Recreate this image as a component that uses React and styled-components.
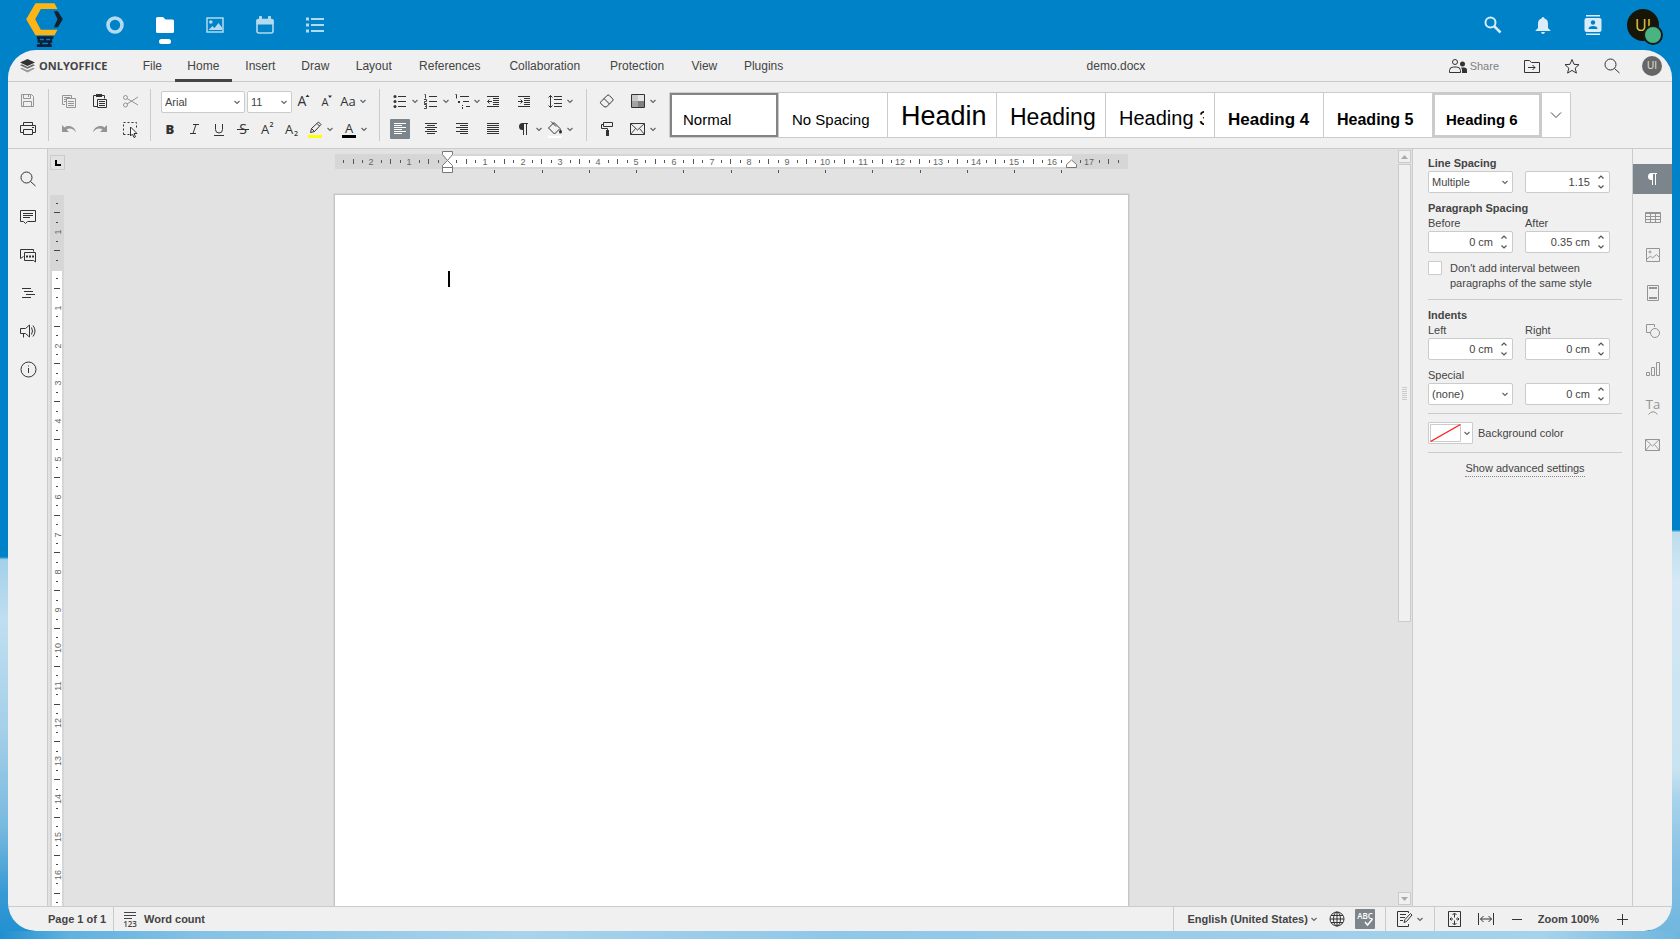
import React from "react";
import styled, { createGlobalStyle, css } from "styled-components";

const c = {
  blue: "#0082c9",
  panel: "#f0f0f0",
  canvas: "#e2e2e2",
  line: "#cbcbcb",
  text: "#444444",
  icon: "#333333",
  muted: "#949494",
  active: "#7d858c",
};

const GlobalStyle = createGlobalStyle`
  * { box-sizing: border-box; }
  body {
    margin: 0;
    font-family: "Liberation Sans", Arial, sans-serif;
    font-size: 11px;
    color: ${c.text};
  }
  button, input, select { font: inherit; color: inherit; }
  button { border: 0; padding: 0; background: none; }
`;

/* ---------- shell ---------- */

const Desktop = styled.div`
  display: flex;
  flex-direction: column;
  height: 100vh;
  min-height: 560px;
  background:
    linear-gradient(90deg, #1f8fd0 0, #5fb1df 4%, #85c2e5 12%, #a8d3ec 31%, #8fc7e8 50%, #9bcde9 72%, #a5d2ec 92%, #6fb6de 100%) bottom / 100% 8px no-repeat,
    linear-gradient(180deg, ${c.blue} 59.3%, #a3d0e9 59.6%, #bfdff0 66%, #a3cfe9 78%, #78badf 88%, #389ad4 95%, #1f8fd0 100%) left / 30px 100% no-repeat,
    linear-gradient(180deg, ${c.blue} 56.4%, #bbddec 56.7%, #d5e8f6 62%, #cde5f2 72%, #c8e3f1 82%, #a8d3eb 85%, #85c0e3 92%, #6fb6de 100%) right / 30px 100% no-repeat,
    ${c.blue};
`;

const TopHeader = styled.header`
  flex: none;
  display: flex;
  align-items: center;
  height: 50px;
  padding: 0 12px 0 26px;
`;

const Brand = styled.a`
  display: block;
  height: 44px;
  margin-right: 27px;
`;

const AppNav = styled.nav`
  display: flex;
  flex: 1;
`;

const AppLink = styled.a`
  display: flex;
  flex-direction: column;
  align-items: center;
  justify-content: center;
  position: relative;
  width: 50px;
  height: 50px;
  color: ${(p) => (p.$current ? "#ffffff" : "#b3daef")};
  &::after {
    content: "";
    display: ${(p) => (p.$current ? "block" : "none")};
    position: absolute;
    bottom: 6px;
    width: 12px;
    height: 5px;
    border-radius: 3px;
    background: #fff;
  }
`;

const HeaderButton = styled.button`
  display: flex;
  align-items: center;
  justify-content: center;
  width: 50px;
  height: 50px;
  color: #d9ecf7;
`;

const UserBadge = styled.span`
  position: relative;
  display: flex;
  align-items: center;
  justify-content: center;
  width: 32px;
  height: 32px;
  border-radius: 50%;
  background: #171408;
  color: #e2d040;
  font: 400 16px/30px "Open Sans", sans-serif;
  &::after {
    content: "";
    position: absolute;
    right: -4px;
    bottom: -4px;
    width: 16px;
    height: 16px;
    border: 2px solid #171b18;
    border-radius: 50%;
    background: #49b382;
  }
`;

const Editor = styled.main`
  flex: 1;
  min-height: 0;
  display: flex;
  flex-direction: column;
  margin: 0 8px 8px;
  border-radius: 28px;
  overflow: hidden;
  background: ${c.panel};
`;

/* ---------- title bar ---------- */

const TitleBar = styled.div`
  flex: none;
  display: flex;
  height: 32px;
  border-bottom: 1px solid ${c.line};
`;

const Logo = styled.div`
  display: flex;
  align-items: center;
  gap: 4px;
  width: 122px;
  padding-left: 12px;
  font: bold 11px "Open Sans", sans-serif;
`;

const Tabs = styled.nav`
  display: flex;
`;

const Tab = styled.button`
  display: flex;
  flex-direction: column;
  align-items: center;
  height: 32px;
  padding: 1px 12px 0;
  font-size: 12px;
  line-height: 31px;
  box-shadow: ${(p) => (p.$current ? `inset 0 -3px ${c.text}` : "none")};
  &::after {
    content: attr(data-label);
    height: 0;
    overflow: hidden;
    visibility: hidden;
    font-weight: bold;
  }
`;

const DocTitle = styled.div`
  flex: 1;
  padding-top: 1px;
  text-align: center;
  font-size: 12px;
  line-height: 31px;
`;

const TitleActions = styled.div`
  display: flex;
  align-items: center;
  gap: 20px;
  padding: 0 10px 0 12px;
`;

const ShareButton = styled.button`
  display: flex;
  align-items: center;
  gap: 3px;
  padding-right: 3px;
  color: #808080;
`;

const SmallAvatar = styled.span`
  width: 20px;
  height: 20px;
  border-radius: 50%;
  background: #666;
  color: #ddd;
  font-size: 10px;
  line-height: 20px;
  text-align: center;
`;

/* ---------- toolbar ---------- */

const Toolbar = styled.div`
  flex: none;
  display: flex;
  padding: 7px 0;
  border-bottom: 1px solid ${c.line};
`;

const Group = styled.div`
  display: grid;
  grid-template-rows: 22px 20px;
  row-gap: 6px;
  padding: 2px ${(p) => p.$end}px 2px 10px;
  border-right: ${(p) => (p.$last ? 0 : 1)}px solid ${c.line};
`;

const Row = styled.div`
  display: grid;
  grid-auto-flow: column;
  justify-content: start;
  align-items: start;
  grid-auto-columns: ${(p) => p.$col || "auto"};
  column-gap: ${(p) => p.$gap}px;
`;

const Tool = styled.button`
  display: flex;
  align-items: center;
  justify-content: center;
  width: ${(p) => (p.$split ? 30 : 20)}px;
  height: 20px;
  border-radius: 1px;
  color: ${(p) => (p.$active ? "#ffffff" : p.disabled ? c.muted : c.icon)};
  background: ${(p) => (p.$active ? c.active : "transparent")};
`;

const SelectBox = styled.label`
  display: grid;
  align-items: center;
  width: ${(p) => p.$w}px;
  height: 22px;
  > * { grid-area: 1 / 1; }
  > svg { justify-self: end; margin-right: 3px; pointer-events: none; }
`;

const Select = styled.select`
  appearance: none;
  width: 100%;
  height: 22px;
  padding: 0 16px 0 3px;
  border: 1px solid ${c.line};
  border-radius: 2px;
  background: #fff;
`;

const Gallery = styled.div`
  flex: 1;
  align-self: center;
  display: flex;
  height: 46px;
  margin-right: 101px;
  border: 1px solid ${c.line};
  border-radius: 1px;
  background: #fff;
`;

const StyleCell = styled.button`
  flex: 1 1 0;
  min-width: 0;
  height: 44px;
  padding: 0 10px 0 13px;
  border-right: 1px solid ${c.line};
  text-align: left;
  color: #000;
  ${(p) => p.$frame && css`box-shadow: inset 0 0 0 2px ${p.$frame};`}
`;

const StyleName = styled.span`
  display: block;
  height: 44px;
  overflow: hidden;
  white-space: nowrap;
  font-size: ${(p) => p.$size}px;
  font-weight: ${(p) => (p.$bold ? "bold" : "normal")};
  line-height: 1;
  &::before {
    content: "";
    display: inline-block;
    height: 32px;
  }
`;

const GalleryMore = styled.button`
  display: flex;
  align-items: center;
  justify-content: center;
  width: 28px;
`;

/* ---------- work area ---------- */

const Work = styled.div`
  flex: 1;
  min-height: 0;
  display: flex;
`;

const LeftBar = styled.aside`
  flex: none;
  display: flex;
  flex-direction: column;
  gap: 18px;
  width: 40px;
  padding: 20px 0 0 10px;
  border-right: 1px solid ${c.line};
`;

const Canvas = styled.section`
  flex: 1;
  min-width: 0;
  display: flex;
  background: ${c.canvas};
`;

const RulerColumn = styled.div`
  flex: none;
  display: flex;
  flex-direction: column;
  gap: 25px;
  width: 18px;
  padding: 6px 0 0 2px;
  overflow: hidden;
`;

const TabStop = styled.button`
  flex: none;
  display: flex;
  width: 15px;
  height: 15px;
  border: 1px solid ${c.line};
`;

const VerticalScale = styled.div`
  flex: 1;
  min-height: 0;
  overflow: hidden;
`;

const PageColumn = styled.div`
  flex: 1;
  min-width: 0;
  display: flex;
  flex-direction: column;
  align-items: center;
  padding-right: 1px;
  overflow: hidden;
`;

const HRulerBox = styled.div`
  flex: none;
  height: 45px;
`;

const Page = styled.article`
  flex: 1;
  width: 795px;
  padding: 76px 113px;
  border: 1px solid #c6c6c6;
  border-bottom: 0;
  background: #fff;
  box-shadow: 0 0 0 1px #d6d6d6;
`;

const Caret = styled.div`
  width: 2px;
  height: 16px;
  background: #000;
`;

const ScrollColumn = styled.div`
  flex: none;
  display: flex;
  flex-direction: column;
  gap: 1px;
  width: 14px;
  padding: 1px 1px 1px 0;
`;

const ScrollButton = styled.button`
  flex: none;
  display: flex;
  align-items: center;
  justify-content: center;
  height: 13px;
  border: 1px solid ${c.line};
  background: ${c.panel};
`;

const ScrollTrack = styled.div`
  flex: 1;
  min-height: 0;
`;

const ScrollThumb = styled.div`
  display: flex;
  align-items: center;
  justify-content: center;
  height: 63%;
  border: 1px solid ${c.line};
  background: ${c.panel};
`;

/* ---------- right panel ---------- */

const Settings = styled.aside`
  flex: none;
  width: 221px;
  padding: 7px 10px 0 15px;
  border-left: 1px solid ${c.line};
  border-right: 1px solid ${c.line};
  line-height: 15px;
`;

const Heading = styled.h2`
  margin: 0;
  font-size: 11px;
  line-height: 15px;
`;

const Fields = styled.div`
  display: grid;
  grid-template-columns: 85px 85px;
  column-gap: 12px;
  align-items: end;
  margin-bottom: 8px;
`;

const FieldLabel = styled.label`
  line-height: 15px;
`;

const Spinner = styled.div`
  display: flex;
  height: 22px;
  border: 1px solid ${c.line};
  border-radius: 2px;
  background: #fff;
`;

const SpinInput = styled.input`
  flex: 1;
  min-width: 0;
  padding: 0 3px 0 0;
  border: 0;
  background: none;
  text-align: right;
`;

const SpinArrows = styled.div`
  display: flex;
  flex-direction: column;
  width: 16px;
`;

const SpinButton = styled.button`
  flex: 1;
  display: flex;
  align-items: center;
  justify-content: center;
`;

const CheckLabel = styled.label`
  display: flex;
  gap: 8px;
  margin-bottom: 8px;
  white-space: pre-line;
`;

const Check = styled.input`
  appearance: none;
  flex: none;
  width: 14px;
  height: 14px;
  margin: 0;
  border: 1px solid ${c.line};
  border-radius: 1px;
  background: #fff;
`;

const Rule = styled.hr`
  height: 1px;
  margin: 0 0 8px;
  border: 0;
  background: ${c.line};
`;

const ColorRow = styled.div`
  display: flex;
  align-items: center;
  gap: 5px;
  margin-bottom: 8px;
`;

const ColorButton = styled.button`
  display: flex;
  align-items: center;
  gap: 1px;
  width: 45px;
  height: 22px;
  padding-left: 1px;
  border: 1px solid ${c.line};
  border-radius: 1px;
  background: #fff;
`;

const Advanced = styled.div`
  text-align: center;
`;

const AdvancedLink = styled.a`
  display: inline-block;
  border-bottom: 1px dotted #888;
  color: inherit;
  text-decoration: none;
`;

const RightBar = styled.nav`
  flex: none;
  display: flex;
  flex-direction: column;
  gap: 8px;
  width: 39px;
  padding-top: 15px;
`;

const RightTab = styled.button`
  display: flex;
  align-items: center;
  justify-content: center;
  height: 30px;
  color: ${(p) => (p.$active ? "#ffffff" : c.muted)};
  background: ${(p) => (p.$active ? c.active : "transparent")};
`;

/* ---------- status bar ---------- */

const StatusBar = styled.footer`
  flex: none;
  display: flex;
  height: 25px;
  border-top: 1px solid ${c.line};
  font-weight: bold;
`;

const StatusGroup = styled.div`
  display: flex;
  align-items: center;
  gap: ${(p) => p.$gap}px;
  padding: 0 ${(p) => p.$end}px 0 ${(p) => p.$start}px;
  border-left: ${(p) => (p.$plain ? 0 : 1)}px solid ${c.line};
  flex: ${(p) => (p.$grow ? 1 : "none")};
`;

const StatusButton = styled.button`
  display: flex;
  align-items: center;
  gap: ${(p) => p.$gap}px;
  height: 20px;
`;

/* ---------- drawings ---------- */

const Svg = ({ children, w = 20, h = 20, ...rest }) => (
  <svg width={w} height={h} viewBox={`0 0 ${w} ${h}`} fill="none" stroke="currentColor" aria-hidden="true" {...rest}>
    {children}
  </svg>
);

const Glyph = ({ children, ...rest }) => (
  <text fill="currentColor" stroke="none" fontFamily="Open Sans, sans-serif" textAnchor="middle" {...rest}>
    {children}
  </text>
);

const Chevron = () => (
  <Svg w={10}><path d="M2.500 9l2.500 2.500L7.500 9" strokeWidth="1.200" stroke="#666" /></Svg>
);

const pilcrow = (
  <g stroke="none" fill="currentColor">
    <path d="M10 4H8.500a3.500 3.500 0 0 0 0 7H10z" />
    <path d="M9 4h1v12H9zM12 4h1v12h-1zM9 4h5v1H9z" />
  </g>
);

const envelope = (
  <>
    <path d="M2.500 4.500h14v11h-14z" />
    <path d="M2.500 4.500l7 6.500 7-6.500M2.500 15.500l5-6M16.500 15.500l-5-6" strokeWidth=".9" />
  </>
);

const lens = (
  <>
    <circle cx="8.500" cy="8.500" r="5.500" />
    <path d="M12.500 12.500l5 4.500" />
  </>
);

const alignPath = (short) => `M4 4.500h12M4 8.500h12M4 12.500h12M${short} 6.500h8M${short} 10.500h8M${short} 14.500h8`;

const icons = {
  save: <path d="M3.500 3.500h10l2 2v10h-12zM5.500 3.500v4h7v-4M10.500 4v2M5.500 15.500v-5h8v5" />,
  print: <path d="M5.500 6.500v-3h9v3M5 13.500H2.500v-7h15v7H15M5.500 10.500h9v5h-9zM14 8.500h2" />,
  copy: <path d="M6 13.500H3.500v-9h9V7M5 6.500h6M5 8.500h2M5 10.500h2M7.500 7.500h9v9h-9zM9 10.500h6M9 12.500h6M9 14.500h6" />,
  paste: (
    <>
      <path d="M7 15.500H3.500v-11h11v3M7.500 8.500h9v8h-9zM9 10.500h6M9 12.500h6M9 14.500h6" />
      <path d="M6 3h6v3H6z" fill="currentColor" stroke="none" />
    </>
  ),
  cut: (
    <>
      <circle cx="4.500" cy="6.500" r="2" />
      <circle cx="4.500" cy="14" r="2" />
      <path d="M6 7.500l11 6.500M6 13l11-7" />
    </>
  ),
  undo: <path d="M3 6v7h7L7.500 10.500C10 8.500 14.500 9 17 13.500 16 7.500 9.500 5.500 5.500 8.500z" fill="currentColor" stroke="none" />,
  redo: <path d="M17 6v7h-7l2.500-2.500C10 8.500 5.500 9 3 13.500 4 7.500 10.500 5.500 14.500 8.500z" fill="currentColor" stroke="none" />,
  pick: (
    <>
      <path d="M2.500 15.500v-12h13v5M2.500 15.500H9" strokeDasharray="2 2" />
      <path d="M9.500 8v9l2-2 1.500 3.500 1.500-.7-1.500-3.300h3z" fill="#fff" />
    </>
  ),
  grow: <><Glyph x="8" y="15" fontSize="14">A</Glyph><path d="M11.500 6L13.500 3.500 15.500 6z" fill="currentColor" stroke="none" /></>,
  shrink: <><Glyph x="9" y="15" fontSize="11">A</Glyph><path d="M12 4.500h4L14 7z" fill="currentColor" stroke="none" /></>,
  caseAa: <Glyph x="10" y="15" fontSize="13">Aa</Glyph>,
  bold: <Glyph x="9" y="15" fontSize="13" fontWeight="800">B</Glyph>,
  italic: <path d="M8 5.500h6M5 14.500h6M11 5.500l-3 9" />,
  underline: <><path d="M6.500 5v5.500a3.500 3.500 0 0 0 7 0V5" /><path d="M5 16.500h10" /></>,
  strike: <><Glyph x="10" y="15" fontSize="14">S</Glyph><path d="M4 10.500h12" /></>,
  sup: <><Glyph x="8" y="15" fontSize="13">A</Glyph><Glyph x="14.500" y="8" fontSize="7" fontWeight="600">2</Glyph></>,
  sub: <><Glyph x="8" y="15" fontSize="13">A</Glyph><Glyph x="15" y="17" fontSize="7" fontWeight="600">2</Glyph></>,
  marker: (
    <>
      <path d="M5.500 13.500l1-4 7-6.500 2.500 2.500-6.500 7zM6.500 9.500l3 3M12 4.500l2.500 2.500" />
      <path d="M3 16h14v3H3z" fill="#ffff00" stroke="none" />
    </>
  ),
  fontColor: <><Glyph x="10" y="14" fontSize="13">A</Glyph><path d="M3 16h14v3H3z" fill="#000" stroke="none" /></>,
  bullets: (
    <>
      <path d="M8 5.500h8M8 10.500h8M8 15.500h8" />
      <g fill="currentColor" stroke="none"><circle cx="5" cy="5.500" r="1.500" /><circle cx="5" cy="10.500" r="1.500" /><circle cx="5" cy="15.500" r="1.500" /></g>
    </>
  ),
  numbers: (
    <>
      <path d="M8 5.500h8M8 10.500h8M8 15.500h8" />
      <path d="M3.500 3.500h1v4M3 8.500h2.500v2h-2v2h2.500M3 13.500h2.500v4H3M4 15.500h1" strokeWidth=".9" />
    </>
  ),
  multilevel: (
    <>
      <path d="M8 5.500h9M11 10.500h6M14 15.500h4M3.500 3.500h1v4" />
      <path d="M6 10h2v2H6zM10 14h1v1h-1zM10 16h1v2h-1z" fill="currentColor" stroke="none" />
    </>
  ),
  outdent: <path d="M4 5.500h12M10 7.500h6M10 9.500h6M10 11.500h6M10 13.500h6M4 15.500h12M9 10.500H4.500M6.500 8.500l-2 2 2 2" />,
  indent: <path d="M4 5.500h12M10 7.500h6M10 9.500h6M10 11.500h6M10 13.500h6M4 15.500h12M4 10.500h4.500M6.500 8.500l2 2-2 2" />,
  spacing: <path d="M9 5.500h8M9 8.500h8M9 12.500h8M9 15.500h8M5.500 4.500v12M3.500 6.500l2-2 2 2M3.500 14.500l2 2 2-2" />,
  left: <path d={alignPath(4)} />,
  center: <path d={alignPath(6)} />,
  right: <path d={alignPath(8)} />,
  justify: <path d="M4 4.500h12M4 6.500h12M4 8.500h12M4 10.500h12M4 12.500h12M4 14.500h12" />,
  pilcrow,
  fill: (
    <>
      <path d="M9 3.500l6 6-5.500 5.500-6-6zM6 2.500l5 5" />
      <path d="M15.500 10c1 1.500 1.500 2 1.500 3a1.500 1.500 0 0 1-3 0c0-1 .5-1.500 1.500-3z" fill="currentColor" stroke="none" />
      <path d="M3 17h14v2H3z" fill="#fff" stroke="none" />
    </>
  ),
  eraser: <path d="M3.800 10.800l6.400-6.400q1-1 2 0l3.400 3.400q1 1 0 2l-6 6H7.200l-3.400-3.400q-.8-.8 0-1.600zM7 7.500l5.500 5.500" />,
  schema: (
    <>
      <g stroke="none">
        <path d="M4 4h6v6H4z" fill="#c9c9c9" /><path d="M10 4h6v6h-6z" fill="#e6e6e6" />
        <path d="M4 10h6v6H4z" fill="#a3a3a3" /><path d="M10 10h6v6h-6z" fill="#808080" />
      </g>
      <path d="M3.500 3.500h13v13h-13z" />
    </>
  ),
  roller: <><path d="M6.500 3.500h9v4h-9zM6.500 5.500h-2v4h6v2" /><path d="M9 11h3v6H9z" fill="currentColor" stroke="none" /></>,
  mail: envelope,
  search: lens,
  comment: <path d="M2.500 3.500h15v11h-8l-2 2-2-2h-3zM5 6.500h10M5 8.500h10M5 10.500h7" />,
  chat: (
    <>
      <path d="M15.500 6.500v-2h-13v9l3-2M6.500 7.500h11v9.500l-2-1.500h-9z" />
      <path d="M8 11.500h2M11 11.500h2M14 11.500h2" strokeWidth="2" />
    </>
  ),
  outline: <path d="M4 5.500h9M6 8.500h9M8 11.500h9M4 14.500h9" />,
  speaker: <path d="M2.500 7.500h5l4-3.500v12l-4-3.500h-5zM5.500 12.500v4M13.500 6.500q2 3.500 0 7M15 4.500q4 5.500 0 11" />,
  info: <><circle cx="10.500" cy="10.500" r="7.500" /><path d="M10.500 9v5M10.500 6.500v1" /></>,
  table: <path d="M2.500 5.500h15v10h-15zM2.500 6.500h15M2.500 9.500h15M2.500 12.500h15M7.500 6v9M12.500 6v9" />,
  image: <><path d="M3.500 3.500h13v13h-13zM4 14l3.500-3 2 2 4-3.500 3 3" /><circle cx="7" cy="7" r="1" /></>,
  headerFooter: <><path d="M4.500 2.500h11v15h-11z" /><path d="M6 5h8M6 15h8" strokeWidth="2" /></>,
  shape: <><path d="M7 11.500H3.500v-8h8V6" /><circle cx="12" cy="12" r="4.500" /></>,
  chart: <path d="M3.500 13.500h3v3h-3zM8.500 8.500h3v8h-3zM13.500 3.500h3v13h-3z" />,
  textArt: <><Glyph x="10" y="12" fontSize="13">Ta</Glyph><path d="M5.500 17.500q4.500-5.500 9 0" /></>,
  folderMove: <path d="M2.500 4.500h5l2 2h8v10h-15zM6 11.500h7M10.500 9l2.500 2.500L10.500 14" />,
  star: <path d="M10 3.500l2 4.800 5 .4-3.800 3.400 1.200 5-4.400-2.700-4.400 2.700 1.200-5L3 8.700l5-.4z" />,
  words: (
    <>
      <path d="M3 3.500h12M3 6.500h12M3 9.500h8" />
      <Glyph x="9" y="18" fontSize="8" fontWeight="600">123</Glyph>
    </>
  ),
  globe: <><circle cx="10" cy="10" r="7" /><ellipse cx="10" cy="10" rx="3.500" ry="7" /><path d="M3 10h14M10 3v14M4 6.500h12M4 13.500h12" /></>,
  spell: <><Glyph x="10" y="10" fontSize="8" fontWeight="600">ABC</Glyph><path d="M10 13l2.500 3 5-6" strokeWidth="1.500" /></>,
  track: <path d="M13.500 4V2.500h-11v15h11V15M5 5.500h6M5 8.500h5M5 11.500h3M9 13.500l1-3 5.500-6 1.500 1.500-5.500 6.500z" />,
  fitPage: <path d="M3.500 2.500h12v15h-12zM9.500 4.500v4M7.500 6l2-2 2 2M9.500 11.500v4M7.500 14l2 2 2-2M5 10h3M6.500 8.500L5 10l1.500 1.500M11 10h3M12.500 8.500L14 10l-1.500 1.500" />,
  fitWidth: <path d="M2.500 4v12M17.500 4v12M4.500 10h11M7.500 7l-3 3 3 3M12.500 7l3 3-3 3" />,
  minus: <path d="M5 10.500h10" />,
  plus: <path d="M7 10.500h11M12.500 5v11" />,
};

const Icon = ({ name }) => <Svg>{icons[name]}</Svg>;

const IconTool = ({ name, label, split, ...rest }) => (
  <Tool type="button" aria-label={label} $split={split} {...rest}>
    <Icon name={name} />
    {split && <Chevron />}
  </Tool>
);

const CM = 37.79;

const ticks = (from, to) => {
  const list = [];
  for (let q = from; q <= to; q += 1) if (q !== 0) list.push(q);
  return list;
};

const HRuler = () => {
  const zero = 113;
  return (
    <Svg w={795} h={26} shapeRendering="crispEdges">
      <g stroke="none">
        <path d="M1 5h793v15H1z" fill="#d6d6d6" />
        <path d="M113 7h625v11H113z" fill="#fff" />
        {ticks(-11, 71).filter((q) => q % 4 !== 0 && q !== 66).map((q) => {
          const half = q % 2 === 0;
          return <rect key={q} x={Math.round(zero + (q * CM) / 4)} y={half ? 10 : 11} width="1" height={half ? 5 : 3} fill="#555" />;
        })}
        {ticks(-2, 17).map((n) => (
          <text key={n} x={Math.round(zero + n * CM)} y="16" fontSize="9" fill="#666" textAnchor="middle">{Math.abs(n)}</text>
        ))}
        {ticks(1, 13).map((n) => (
          <rect key={n} x={Math.round(zero + n * 47.25)} y="21" width="1" height="3" fill="#555" />
        ))}
      </g>
      <g fill="#fff" stroke="#777" shapeRendering="auto">
        <path d="M108.500 2.500h10v3l-5 6-5-6z" />
        <path d="M108.500 18.500v-2l5-5 5 5v2zM108.500 18.500h10v5h-10z" />
        <path d="M732.500 18.500v-3l5-4.500 5 4.500v3z" />
      </g>
    </Svg>
  );
};

const VRuler = () => {
  const zero = 75;
  return (
    <Svg w={14} h={1123} shapeRendering="crispEdges">
      <g stroke="none">
        <path d="M0 0h14v1123H0z" fill="#d6d6d6" />
        <path d="M2 76h10v1047H2z" fill="#fff" />
        {ticks(-7, 103).filter((q) => q % 4 !== 0).map((q) => {
          const half = q % 2 === 0;
          return <rect key={q} x={half ? 4 : 6} y={Math.round(zero + (q * CM) / 4) - 1} width={half ? 6 : 2} height="1" fill="#444" />;
        })}
        {ticks(-1, 25).map((n) => (
          <text key={n} transform={`translate(11 ${Math.round(zero + n * CM)}) rotate(-90)`} fontSize="9" fill="#666" textAnchor="middle">
            {Math.abs(n)}
          </text>
        ))}
      </g>
    </Svg>
  );
};

const BrandMark = () => (
  <svg width="37" height="44" viewBox="80 9 110 132" aria-hidden="true">
    <path d="M80 58l28-48h57l9 17h-50l-17 31 17 31h50l-9 17h-57z" fill="#fdb515" />
    <path d="M163 34h12l15 24-15 24h-12l11-24z" fill="#14202e" />
    <path d="M112 109h50v7h-50zM114 121h44v7h-44zM112 133h45v8h-45zM114 109h7v17h-7zM133 114h7v12h-7zM121 124h7v12h-7zM146 124h7v12h-7zM152 112h6v14h-6z" fill="#0b2038" />
  </svg>
);

const StackMark = () => (
  <svg width="15" height="14" viewBox="0 0 15 14" aria-hidden="true">
    <path d="M7.500 0L15 3.500 7.500 7 0 3.500z" fill="#333" />
    <path d="M0 6.200l2-.9 5.500 2.600L13 5.300l2 .9-7.500 3.600z" fill="#666" />
    <path d="M0 9.600l2-.9 5.500 2.600L13 8.700l2 .9-7.500 3.900z" fill="#999" />
  </svg>
);

const appIcons = [
  { label: "Dashboard", art: <circle cx="10" cy="10" r="7" strokeWidth="3.600" /> },
  { label: "Files", current: true, art: <path d="M1 3.500Q1 2 2.500 2H8l2.500 2.500h7Q19 4.500 19 6v10.500q0 1.500-1.500 1.500h-15Q1 18 1 16.500z" fill="currentColor" stroke="none" /> },
  { label: "Photos", art: <><path d="M2 3h16v14H2z" strokeWidth="1.500" /><circle cx="5.800" cy="7" r="1.800" fill="currentColor" stroke="none" /><path d="M3.500 15l4-4 2 2 4-5 3.500 4.500V15z" fill="currentColor" stroke="none" /></> },
  { label: "Calendar", art: <><rect x="2" y="4.500" width="16" height="13.500" rx="2" strokeWidth="1.600" /><path d="M2 4.500h16V9H2zM4.500 1.500h2v3h-2zM13.500 1.500h2v3h-2z" fill="currentColor" strokeWidth="1" /></> },
  { label: "Tasks", art: <><path d="M6 4h13M6 10h13M6 16h13" strokeWidth="2" /><path d="M1 4h3M1 10h3M1 16h3" strokeWidth="3" /></> },
];

const tabNames = ["File", "Home", "Insert", "Draw", "Layout", "References", "Collaboration", "Protection", "View", "Plugins"];

const galleryStyles = [
  { name: "Normal", size: 15, frame: "#848484" },
  { name: "No Spacing", size: 15 },
  { name: "Heading 1", size: 27 },
  { name: "Heading 2", size: 23 },
  { name: "Heading 3", size: 20 },
  { name: "Heading 4", size: 17, bold: true },
  { name: "Heading 5", size: 16, bold: true },
  { name: "Heading 6", size: 15, bold: true, frame: c.line },
];

const leftTools = [["search", "Find"], ["comment", "Comments"], ["chat", "Chat"], ["outline", "Headings"], ["speaker", "Feedback"], ["info", "About"]];

const rightTools = [["pilcrow", "Paragraph"], ["table", "Table"], ["image", "Image"], ["headerFooter", "Header and footer"], ["shape", "Shape"], ["chart", "Chart"], ["textArt", "Text art"], ["mail", "Mail merge"]];

const Dropdown = ({ label, id, w, value }) => (
  <SelectBox $w={w}>
    <Select id={id} aria-label={label} defaultValue={value}>
      <option>{value}</option>
    </Select>
    <Chevron />
  </SelectBox>
);

const SpinField = ({ id, label, value }) => (
  <Spinner>
    <SpinInput id={id} type="text" aria-label={label} defaultValue={value} />
    <SpinArrows>
      <SpinButton type="button" aria-label="Increase">
        <Svg w={8} h={6}><path d="M1.500 4.500L4 2l2.500 2.500" strokeWidth="1.200" stroke="#555" /></Svg>
      </SpinButton>
      <SpinButton type="button" aria-label="Decrease">
        <Svg w={8} h={6}><path d="M1.500 1.500L4 4l2.500-2.500" strokeWidth="1.200" stroke="#555" /></Svg>
      </SpinButton>
    </SpinArrows>
  </Spinner>
);

/* ---------- page ---------- */

export default function App() {
  return (
    <Desktop>
      <GlobalStyle />
      <TopHeader>
        <Brand href="#" aria-label="Home"><BrandMark /></Brand>
        <AppNav>
          {appIcons.map((a) => (
            <AppLink key={a.label} href="#" aria-label={a.label} $current={a.current}>
              <Svg>{a.art}</Svg>
            </AppLink>
          ))}
        </AppNav>
        <HeaderButton aria-label="Search">
          <Svg><circle cx="7.500" cy="7.500" r="5" strokeWidth="2" /><path d="M11 11l6.500 6.500" strokeWidth="2.500" /></Svg>
        </HeaderButton>
        <HeaderButton aria-label="Notifications">
          <Svg><path d="M10 2q1.500 0 1.500 1.500Q15 4.500 15 8.500V13l2.500 2.500v.5h-15v-.5L5 13V8.500q0-4 3.500-5Q8.500 2 10 2zM8 17h4q-.5 2-2 2t-2-2z" fill="currentColor" stroke="none" /></Svg>
        </HeaderButton>
        <HeaderButton aria-label="Contacts">
          <Svg>
            <path d="M3 .8h14M3 19.200h14" strokeWidth="1.600" />
            <path d="M3.500 3h13Q18.500 3 18.500 5v10q0 2-2 2h-13q-2 0-2-2V5q0-2 2-2z" fill="currentColor" stroke="none" />
            <g fill={c.blue} stroke="none"><circle cx="10" cy="7.500" r="2.200" /><path d="M5.500 14q0-3 4.500-3t4.500 3z" /></g>
          </Svg>
        </HeaderButton>
        <HeaderButton aria-label="Account"><UserBadge>UJ</UserBadge></HeaderButton>
      </TopHeader>

      <Editor>
        <TitleBar>
          <Logo><StackMark />ONLYOFFICE</Logo>
          <Tabs>
            {tabNames.map((t) => (
              <Tab key={t} type="button" data-label={t} $current={t === "Home"}>{t}</Tab>
            ))}
          </Tabs>
          <DocTitle>demo.docx</DocTitle>
          <TitleActions>
            <ShareButton type="button">
              <Svg color={c.icon}>
                <circle cx="8" cy="6" r="2.500" />
                <path d="M2.500 16.500v-2q0-3.500 4-3.500h3q4 0 4 3.500v2z" />
                <g fill="currentColor" stroke="none"><circle cx="15.500" cy="8" r="2.500" /><path d="M14 11.500h3q3 0 3 2.500v3h-5v-3q0-1.500-1-2.500z" /></g>
              </Svg>
              Share
            </ShareButton>
            <Tool type="button" aria-label="Open file location"><Icon name="folderMove" /></Tool>
            <Tool type="button" aria-label="Favorite"><Icon name="star" /></Tool>
            <Tool type="button" aria-label="Search"><Icon name="search" /></Tool>
            <SmallAvatar>UI</SmallAvatar>
          </TitleActions>
        </TitleBar>

        <Toolbar>
          <Group $end={10}>
            <Row><IconTool name="save" label="Save" disabled /></Row>
            <Row><IconTool name="print" label="Print" /></Row>
          </Group>
          <Group $end={9}>
            <Row $gap={11}>
              <IconTool name="copy" label="Copy" disabled />
              <IconTool name="paste" label="Paste" />
              <IconTool name="cut" label="Cut" disabled />
            </Row>
            <Row $gap={11}>
              <IconTool name="undo" label="Undo" disabled />
              <IconTool name="redo" label="Redo" disabled />
              <IconTool name="pick" label="Select" />
            </Row>
          </Group>
          <Group $end={10}>
            <Row $gap={2}>
              <Dropdown label="Font" w={84} value="Arial" />
              <Dropdown label="Font size" w={45} value="11" />
              <IconTool name="grow" label="Increase font size" />
              <IconTool name="shrink" label="Decrease font size" />
              <IconTool name="caseAa" label="Change case" split />
            </Row>
            <Row $gap={4}>
              <IconTool name="bold" label="Bold" />
              <IconTool name="italic" label="Italic" />
              <IconTool name="underline" label="Underline" />
              <IconTool name="strike" label="Strikethrough" />
              <IconTool name="sup" label="Superscript" />
              <IconTool name="sub" label="Subscript" />
              <IconTool name="marker" label="Highlight color" split />
              <IconTool name="fontColor" label="Font color" split />
            </Row>
          </Group>
          <Group $end={11}>
            <Row $gap={1} $col="30px">
              <IconTool name="bullets" label="Bullets" split />
              <IconTool name="numbers" label="Numbering" split />
              <IconTool name="multilevel" label="Multilevel list" split />
              <IconTool name="outdent" label="Decrease indent" />
              <IconTool name="indent" label="Increase indent" />
              <IconTool name="spacing" label="Line spacing" split />
            </Row>
            <Row $gap={1} $col="30px">
              <IconTool name="left" label="Align left" $active />
              <IconTool name="center" label="Align center" />
              <IconTool name="right" label="Align right" />
              <IconTool name="justify" label="Justify" />
              <IconTool name="pilcrow" label="Nonprinting characters" split />
              <IconTool name="fill" label="Shading" split />
            </Row>
          </Group>
          <Group $end={11} $last>
            <Row $gap={1} $col="30px">
              <IconTool name="eraser" label="Clear style" />
              <IconTool name="schema" label="Color scheme" split />
            </Row>
            <Row $gap={1} $col="30px">
              <IconTool name="roller" label="Copy style" />
              <IconTool name="mail" label="Mail merge" split />
            </Row>
          </Group>
          <Gallery>
            {galleryStyles.map((s) => (
              <StyleCell key={s.name} type="button" $frame={s.frame}>
                <StyleName $size={s.size} $bold={s.bold}>{s.name}</StyleName>
              </StyleCell>
            ))}
            <GalleryMore type="button" aria-label="More styles">
              <Svg w={12} h={12}><path d="M1 3.500l5 5 5-5" /></Svg>
            </GalleryMore>
          </Gallery>
        </Toolbar>

        <Work>
          <LeftBar>
            {leftTools.map(([name, label]) => <IconTool key={name} name={name} label={label} />)}
          </LeftBar>

          <Canvas>
            <RulerColumn>
              <TabStop type="button" aria-label="Tab stop">
                <Svg w={13} h={13}><path d="M5 4v5h5" stroke="#000" strokeWidth="2" /></Svg>
              </TabStop>
              <VerticalScale><VRuler /></VerticalScale>
            </RulerColumn>
            <PageColumn>
              <HRulerBox><HRuler /></HRulerBox>
              <Page><Caret /></Page>
            </PageColumn>
            <ScrollColumn>
              <ScrollButton type="button" aria-label="Scroll up">
                <Svg w={7} h={4}><path d="M0 4L3.500 0 7 4z" fill="#aaa" stroke="none" /></Svg>
              </ScrollButton>
              <ScrollTrack>
                <ScrollThumb>
                  <Svg w={5} h={13}><path d="M0 .5h5M0 2.500h5M0 4.500h5M0 6.500h5M0 8.500h5M0 10.500h5M0 12.500h5" stroke={c.line} /></Svg>
                </ScrollThumb>
              </ScrollTrack>
              <ScrollButton type="button" aria-label="Scroll down">
                <Svg w={7} h={4}><path d="M0 0L3.500 4 7 0z" fill="#aaa" stroke="none" /></Svg>
              </ScrollButton>
            </ScrollColumn>
          </Canvas>

          <Settings>
            <Heading>Line Spacing</Heading>
            <Fields>
              <Dropdown label="Line spacing rule" w={85} value="Multiple" />
              <SpinField label="Line spacing value" value="1.15" />
            </Fields>
            <Heading>Paragraph Spacing</Heading>
            <Fields>
              <FieldLabel htmlFor="before">Before</FieldLabel>
              <FieldLabel htmlFor="after">After</FieldLabel>
              <SpinField id="before" value="0 cm" />
              <SpinField id="after" value="0.35 cm" />
            </Fields>
            <CheckLabel>
              <Check type="checkbox" />
              {"Don't add interval between\nparagraphs of the same style"}
            </CheckLabel>
            <Rule />
            <Heading>Indents</Heading>
            <Fields>
              <FieldLabel htmlFor="left">Left</FieldLabel>
              <FieldLabel htmlFor="right">Right</FieldLabel>
              <SpinField id="left" value="0 cm" />
              <SpinField id="right" value="0 cm" />
            </Fields>
            <FieldLabel htmlFor="special">Special</FieldLabel>
            <Fields>
              <Dropdown id="special" w={85} value="(none)" />
              <SpinField label="Special indent value" value="0 cm" />
            </Fields>
            <Rule />
            <ColorRow>
              <ColorButton id="background" type="button">
                <Svg w={31} h={18}><path d="M.5.500h30v17H.5z" stroke={c.line} /><path d="M.5 17.500l30-17" stroke="#ff2020" strokeWidth="1.300" /></Svg>
                <Chevron />
              </ColorButton>
              <FieldLabel htmlFor="background">Background color</FieldLabel>
            </ColorRow>
            <Rule />
            <Advanced><AdvancedLink href="#">Show advanced settings</AdvancedLink></Advanced>
          </Settings>

          <RightBar>
            {rightTools.map(([name, label], i) => (
              <RightTab key={name} type="button" aria-label={label} $active={i === 0}>
                <Icon name={name} />
              </RightTab>
            ))}
          </RightBar>
        </Work>

        <StatusBar>
          <StatusGroup $plain $start={40} $end={7}>Page 1 of 1</StatusGroup>
          <StatusGroup $start={7} $end={0} $grow>
            <StatusButton type="button" $gap={3}><Icon name="words" />Word count</StatusButton>
          </StatusGroup>
          <StatusGroup $start={13} $end={10} $gap={8}>
            <StatusButton type="button" $gap={1}>English (United States)<Chevron /></StatusButton>
            <IconTool name="globe" label="Set document language" />
            <IconTool name="spell" label="Spell checking" $active />
          </StatusGroup>
          <StatusGroup $start={9} $end={9}>
            <IconTool name="track" label="Track changes" split />
          </StatusGroup>
          <StatusGroup $start={10} $end={42} $gap={11}>
            <IconTool name="fitPage" label="Fit to page" />
            <IconTool name="fitWidth" label="Fit to width" />
            <IconTool name="minus" label="Zoom out" />
            <span>Zoom 100%</span>
            <IconTool name="plus" label="Zoom in" />
          </StatusGroup>
        </StatusBar>
      </Editor>
    </Desktop>
  );
}
